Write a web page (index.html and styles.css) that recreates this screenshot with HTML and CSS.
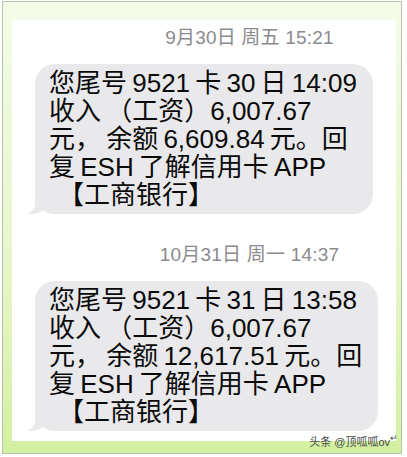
FILE: index.html
```html
<!DOCTYPE html>
<html lang="zh-CN">
<head>
    <meta charset="UTF-8">
    <meta name="viewport" content="width=device-width, initial-scale=1.0">
    <title>短信</title>
    <link rel="stylesheet" href="styles.css">
</head>
<body>
    <div class="frame">
        <div class="screen">
            <div class="stamp">9月30日 周五 15:21</div>
            <div class="row">
                <div class="bubble">您尾号&thinsp;9521&thinsp;卡&thinsp;30&thinsp;日&thinsp;14:09<br>收入&thinsp;（工资）6,007.67<br>元，&thinsp;余额&thinsp;6,609.84&thinsp;元。回<br>复&thinsp;ESH&thinsp;了解信用卡&thinsp;APP<br><span class="sign">【工商银行】</span></div>
            </div>

            <div class="stamp">10月31日 周一 14:37</div>
            <div class="row">
                <div class="bubble">您尾号&thinsp;9521&thinsp;卡&thinsp;31&thinsp;日&thinsp;13:58<br>收入&thinsp;（工资）6,007.67<br>元，&thinsp;余额&thinsp;12,617.51&thinsp;元。回<br>复&thinsp;ESH&thinsp;了解信用卡&thinsp;APP<br><span class="sign">【工商银行】</span></div>
            </div>
        </div>
        <div class="mark">头条 @顶呱呱ov<span class="ret">↵</span></div>
    </div>
</body>
</html>
```

FILE: styles.css
```css
body {
    margin: 0;
    background: #ffffff;
    font-family: "Liberation Sans", "Noto Sans CJK SC", sans-serif;
}
.frame {
    position: relative;
    margin: 1px 0 0 2px;
    width: 400px;
    height: 453px;
    border: 1px solid #b9c2aa;
    box-sizing: border-box;
    background: linear-gradient(to bottom, #f4fbe8, #e6f6c8 60%, #d3f0a0);
    padding: 18px 5px 12px 9px;
}
.screen {
    background: #ffffff;
    height: 100%;
    padding-top: 6px;
    box-sizing: border-box;
}
.stamp {
    text-align: center;
    padding-left: 91px;
    font-size: 19px;
    line-height: 24px;
    letter-spacing: 0.2px;
    color: #8a8a8e;
}
.row {
    padding: 14px 0 0 23px;
    margin-bottom: 29px;
}
.bubble {
    position: relative;
    display: inline-block;
    background: #e9e9eb;
    border-radius: 20px;
    padding: 5px 16px 5px 14px;
    font-size: 26px;
    line-height: 28px;
    color: #0a0a0a;
    white-space: nowrap;
}
.sign {
    margin-left: 9px;
}
.bubble::before {
    content: "";
    position: absolute;
    bottom: 0;
    left: -7px;
    width: 20px;
    height: 20px;
    background: #e9e9eb;
    border-bottom-right-radius: 15px;
}
.bubble::after {
    content: "";
    position: absolute;
    bottom: 0;
    left: -10px;
    width: 10px;
    height: 20px;
    background: #ffffff;
    border-bottom-right-radius: 10px;
}
.mark {
    position: absolute;
    right: 3px;
    bottom: 4px;
    font-size: 11px;
    color: #4a4a4a;
}
.ret {
    font-size: 9px;
    vertical-align: top;
}
```
